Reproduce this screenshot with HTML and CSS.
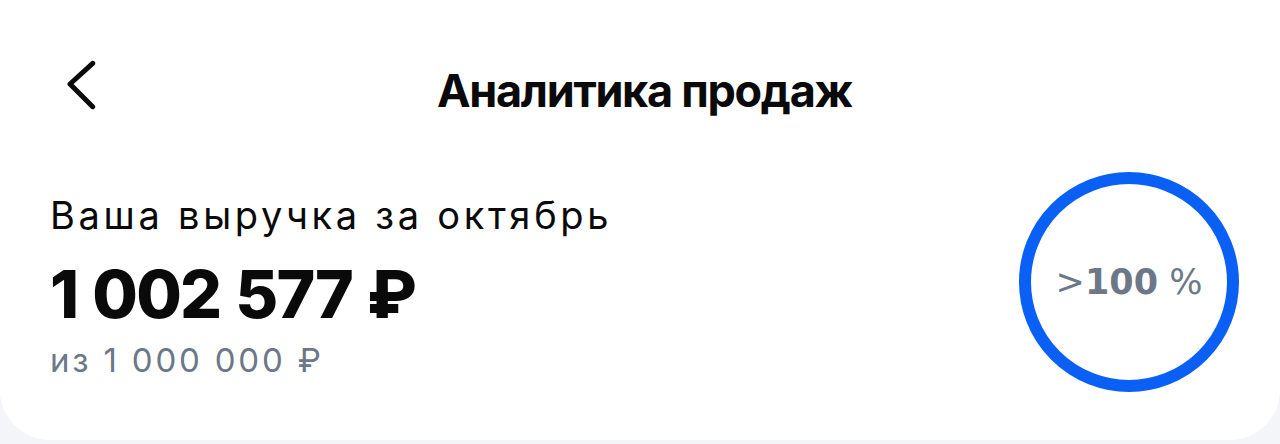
FILE: index.html
```html
<!DOCTYPE html>
<html lang="ru">
<head>
<meta charset="utf-8">
<title>Аналитика продаж</title>
<link rel="stylesheet" href="styles.css">
</head>
<body>
<div class="card">
  <header class="header">
    <div class="back">
      <svg class="chev" width="30" height="50" viewBox="0 0 30 50" aria-hidden="true">
        <path d="M26.7 3.3 L4 24 L26.7 46.7" fill="none" stroke="#0a0a0a" stroke-width="5" stroke-linecap="round" stroke-linejoin="round"/>
      </svg>
    </div>
    <h1 class="title">Аналитика продаж</h1>
    <div></div>
  </header>
  <section class="row">
    <div class="info">
      <div class="label">Ваша выручка за октябрь</div>
      <div class="amount">1 002 577 ₽</div>
      <div class="plan">из 1 000 000 ₽</div>
    </div>
    <div class="ring">
      <span class="pct"><span class="gt">&gt;</span><b class="num">100</b><span class="sign"> %</span></span>
    </div>
  </section>
</div>
</body>
</html>
```
FILE: styles.css
```css
html, body {
  margin: 0;
  padding: 0;
}
body {
  background: #f4f5f9;
  width: 1280px;
  height: 444px;
  overflow: hidden;
  font-family: Inter, "Noto Sans", sans-serif;
  color: #0a0a0a;
}
.card {
  background: #ffffff;
  height: 440px;
  border-radius: 0 0 50px 50px;
  padding: 0 41px 0 50px;
  box-sizing: border-box;
}
.header {
  display: grid;
  grid-template-columns: 1fr auto 1fr;
  align-items: start;
  padding-top: 60px;
  height: 122px;
  box-sizing: border-box;
}
.back {
  padding-left: 16px;
}
.chev {
  display: block;
}
.title {
  margin: 0;
  font-size: 45px;
  font-weight: 700;
  line-height: 62px;
  letter-spacing: -1.3px;
}
.row {
  display: flex;
  justify-content: space-between;
  align-items: flex-start;
  margin-top: 50px;
}
.info {
  margin-top: 21px;
  display: flex;
  flex-direction: column;
}
.label {
  font-size: 38px;
  line-height: 45px;
  font-weight: 400;
  letter-spacing: 3.7px;
}
.amount {
  margin-top: 20px;
  font-size: 66px;
  line-height: 72px;
  font-weight: 800;
  letter-spacing: -1.7px;
  word-spacing: 2px;
}
.plan {
  margin-top: 10px;
  font-size: 33px;
  line-height: 40px;
  color: #6c7787;
  letter-spacing: 2.8px;
}
.ring {
  width: 220px;
  height: 220px;
  border: 12px solid #0a60f5;
  border-radius: 50%;
  box-sizing: border-box;
  display: flex;
  align-items: center;
  justify-content: center;
}
.pct {
  font-family: "DejaVu Sans", Verdana, sans-serif;
  color: #6c7787;
  font-size: 35px;
  line-height: 40px;
  white-space: nowrap;
}
.num {
  font-weight: 700;
}
```
